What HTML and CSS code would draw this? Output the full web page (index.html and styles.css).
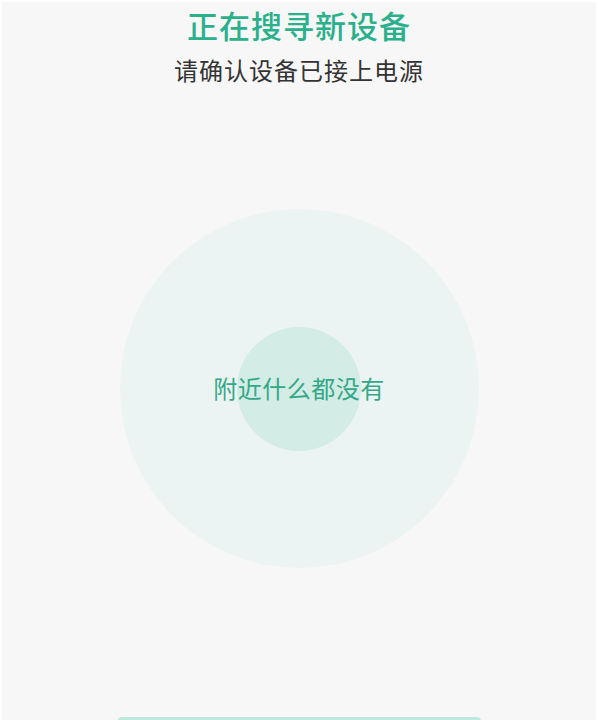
FILE: index.html
```html
<!DOCTYPE html>
<html>
<head>
  <meta charset="UTF-8">
  <title>搜寻新设备</title>
  <link rel="stylesheet" href="styles.css">
</head>
<body>
  <div class="screen">
    <div class="header">
      <h1 class="title">正在搜寻新设备</h1>
      <p class="subtitle">请确认设备已接上电源</p>
    </div>
    <div class="radar">
      <div class="ring-outer">
        <div class="ring-inner"></div>
        <span class="empty">附近什么都没有</span>
      </div>
    </div>
    <div class="footer">
      <div class="retry"></div>
    </div>
  </div>
</body>
</html>
```

FILE: styles.css
```css
html, body {
  margin: 0;
  padding: 0;
}

body {
  background: #ffffff;
  font-family: "Noto Sans CJK SC", "Noto Sans", sans-serif;
}

.screen {
  width: 598px;
  height: 720px;
  box-sizing: border-box;
  border: 2px solid #ffffff;
  border-bottom: none;
  background: #f7f7f7;
  overflow: hidden;
  display: flex;
  flex-direction: column;
  align-items: center;
}

.header {
  text-align: center;
  padding-top: 3px;
}

.title {
  margin: 0;
  font-size: 31px;
  line-height: 40px;
  font-weight: 500;
  color: #2bb08c;
  letter-spacing: 1px;
}

.subtitle {
  margin: 9px 0 0;
  font-size: 24px;
  line-height: 32px;
  color: #333333;
  letter-spacing: 1px;
}

.radar {
  margin-top: 123px;
}

.ring-outer {
  width: 359px;
  height: 359px;
  border-radius: 50%;
  background: #ebf4f2;
  display: flex;
  align-items: center;
  justify-content: center;
  position: relative;
}

.ring-inner {
  width: 124px;
  height: 124px;
  border-radius: 50%;
  background: #d4ece6;
}

.empty {
  position: absolute;
  left: 0;
  right: 0;
  top: 50%;
  transform: translateY(-52%);
  text-align: center;
  font-size: 24px;
  line-height: 32px;
  color: #34a886;
  letter-spacing: 0.5px;
}

.footer {
  margin-top: 149px;
}

.retry {
  width: 363px;
  height: 48px;
  border-radius: 4px;
  background: #bfe9de;
}
```
